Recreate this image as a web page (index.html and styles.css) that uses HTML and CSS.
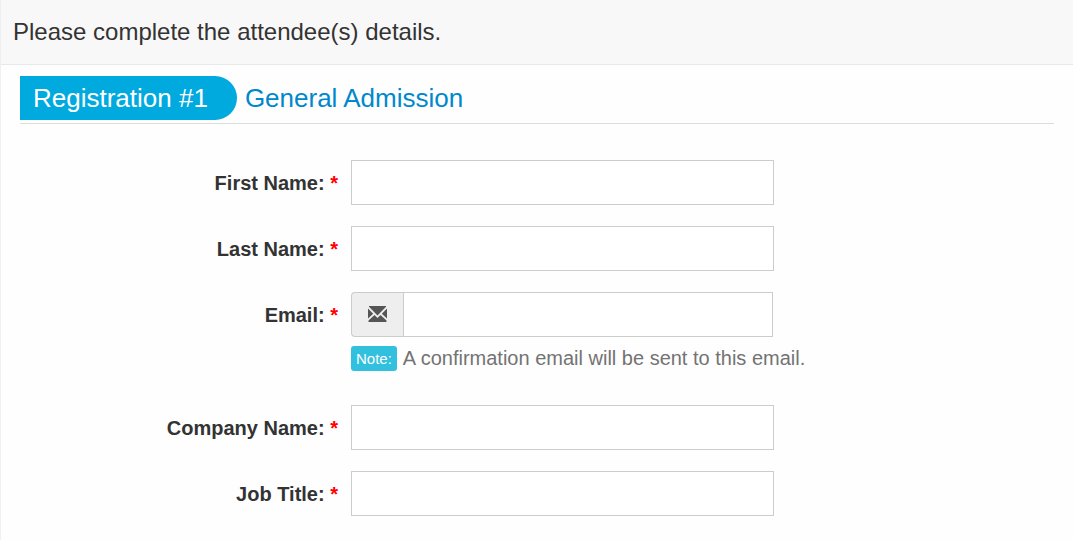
FILE: index.html
```html
<!DOCTYPE html>
<html lang="en">
<head>
  <meta charset="UTF-8">
  <title>Attendee details</title>
  <link rel="stylesheet" href="styles.css">
</head>
<body>
  <form class="attendee-form">
    <div class="intro">Please complete the attendee(s) details.</div>

    <div class="content">
      <h2 class="section-title">
        <span class="badge">Registration #1</span>
        <span>General Admission</span>
      </h2>

      <div class="row">
        <label for="first-name">First Name: <span class="required">*</span></label>
        <input type="text" id="first-name" name="first_name" required>
      </div>

      <div class="row">
        <label for="last-name">Last Name: <span class="required">*</span></label>
        <input type="text" id="last-name" name="last_name" required>
      </div>

      <div class="row">
        <label for="email">Email: <span class="required">*</span></label>
        <div class="field">
          <div class="input-group">
            <span class="addon">
              <svg width="19" height="16" viewBox="0 0 19 16" fill="#555" aria-hidden="true">
                <path d="M1 0h17v0.8L9.500 9.500 1 0.800z"/>
                <path d="M0 2.500l5.200 5.300L0 12.600z"/>
                <path d="M19 2.500l-5.200 5.300 5.200 4.800z"/>
                <path d="M0.500 16v-1.500l6-5.500 3 3 3-3 6 5.500V16z"/>
              </svg>
            </span>
            <input type="email" id="email" name="email" required>
          </div>
          <p class="help"><span class="note">Note:</span>A confirmation email will be sent to this email.</p>
        </div>
      </div>

      <div class="row">
        <label for="company">Company Name: <span class="required">*</span></label>
        <input type="text" id="company" name="company" required>
      </div>

      <div class="row">
        <label for="job-title">Job Title: <span class="required">*</span></label>
        <input type="text" id="job-title" name="job_title" required>
      </div>
    </div>
  </form>
</body>
</html>
```
FILE: styles.css
```css
* {
  box-sizing: border-box;
}
body {
  margin: 0;
  font-family: "Liberation Sans", Arial, sans-serif;
  font-size: 20px;
  color: #333;
  background-color: #fefefe;
}
.attendee-form {
  border-left: 1px solid #f0f0f0;
}
.intro {
  padding: 16px 12px;
  font-size: 24px;
  line-height: 32px;
  background-color: #f8f8f8;
  border-bottom: 1px solid #e8e8e8;
}
.content {
  padding: 11px 19px 24px;
}
.section-title {
  display: flex;
  align-items: center;
  gap: 8px;
  margin: 0 0 36px;
  padding-bottom: 3px;
  font-size: 26px;
  font-weight: normal;
  line-height: 44px;
  color: #0088cc;
  border-bottom: 1px solid #ddd;
}
.badge {
  padding: 0 29px 0 13px;
  color: white;
  background-color: #00aadf;
  border-radius: 0 22px 22px 0;
}
.row {
  display: grid;
  grid-template-columns: 318px 1fr;
  column-gap: 13px;
  align-items: start;
  margin-bottom: 19px;
}
label {
  font-weight: bold;
  line-height: 47px;
  text-align: right;
}
.required {
  color: red;
}
input {
  width: 100%;
  max-width: 423px;
  height: 45px;
  padding: 8px 12px;
  font: inherit;
  color: #555;
  background-color: white;
  border: 1px solid #ccc;
}
.input-group {
  display: flex;
  max-width: 422px;
}
.input-group input {
  flex: 1;
  min-width: 0;
}
.addon {
  display: flex;
  align-items: center;
  justify-content: center;
  width: 52px;
  padding-bottom: 1px;
  background-color: #eee;
  border: 1px solid #ccc;
  border-right: none;
  border-radius: 4px 0 0 4px;
}
.help {
  display: flex;
  align-items: center;
  gap: 6px;
  margin: 9px 0 15px;
  line-height: 25px;
  color: #737373;
}
.note {
  padding: 0 5px;
  font-size: 15px;
  color: white;
  background-color: #31c0de;
  border-radius: 3px;
}
```
